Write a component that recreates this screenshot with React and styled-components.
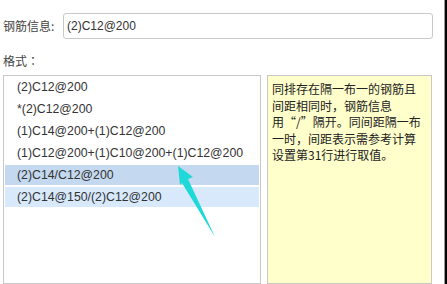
import React from "react";
import styled, { createGlobalStyle } from "styled-components";

const formats = [
  "(2)C12@200",
  "*(2)C12@200",
  "(1)C14@200+(1)C12@200",
  "(1)C12@200+(1)C10@200+(1)C12@200",
  "(2)C14/C12@200",
  "(2)C14@150/(2)C12@200",
];

const hintLines = [
  "同排存在隔一布一的钢筋且",
  "间距相同时，钢筋信息",
  "用“/”隔开。同间距隔一布",
  "一时，间距表示需参考计算",
  "设置第31行进行取值。",
];

const App = () => {
  return (
    <>
      <GlobalStyle />
      <Page>
        <Main>
          <FieldRow>
            <Label>钢筋信息:</Label>
            <Input defaultValue="(2)C12@200" />
          </FieldRow>
          <SectionLabel>
            格式<Colon>：</Colon>
          </SectionLabel>
          <Panels>
            <FormatList>
              {formats.map((f, i) => (
                <FormatItem key={f} tone={i === 4 ? "active" : i === 5 ? "hover" : null}>
                  {f}
                </FormatItem>
              ))}
            </FormatList>
            <Hint>
              {hintLines.map((l) => (
                <HintLine key={l}>{l}</HintLine>
              ))}
            </Hint>
          </Panels>
          {/* annotation arrow drawn over the list */}
          <Arrow width="60" height="80" viewBox="0 0 60 80">
            <polygon points="18,11 33,22 28,24 55,82 22,28 20,30" fill="#1fd9d9" />
          </Arrow>
        </Main>
        <Edge />
      </Page>
    </>
  );
};

const GlobalStyle = createGlobalStyle`
  html, body {
    margin: 0;
    padding: 0;
    background: #fff;
  }
  body {
    font-family: "Noto Sans CJK SC", sans-serif;
    color: #333;
  }
`;

const Page = styled.div`
  display: flex;
  width: 447px;
  height: 284px;
  overflow: hidden;
`;

const Main = styled.div`
  position: relative;
  flex: 1;
  padding: 13px 0 0 3px;
`;

const Edge = styled.div`
  width: 2px;
  border-left: 1px solid #9a9a9a;
  background: #050505;
`;

const FieldRow = styled.div`
  display: flex;
  align-items: center;
  height: 25px;
`;

const Label = styled.span`
  width: 60px;
  font-size: 12px;
  color: #444;
`;

const Input = styled.input`
  box-sizing: border-box;
  width: 370px;
  height: 26px;
  margin: 0;
  padding: 0 3px;
  border: 1px solid #c9c9c9;
  border-radius: 3px;
  font-family: "Liberation Sans", sans-serif;
  font-size: 12px;
  color: #333;
  outline: none;
`;

const SectionLabel = styled.div`
  margin-top: 14px;
  height: 18px;
  line-height: 18px;
  font-size: 12px;
  color: #444;
`;

const Colon = styled.span`
  font-family: "Noto Sans CJK TC", sans-serif;
`;

const Panels = styled.div`
  display: flex;
  gap: 6px;
  margin-top: 5px;
`;

const FormatList = styled.div`
  box-sizing: border-box;
  width: 258px;
  height: 209px;
  padding: 1px 0;
  border: 1px solid #c9c9c9;
  background: #fff;
`;

const FormatItem = styled.div`
  height: 20px;
  margin: 1px 1px 2px 1px;
  padding-left: 12px;
  line-height: 20px;
  font-family: "Liberation Sans", sans-serif;
  font-size: 12.3px;
  color: #333;
  white-space: nowrap;
  background: ${({ tone }) =>
    tone === "active" ? "#c4d9ef" : tone === "hover" ? "#d8e9fc" : "transparent"};
  &:first-child {
    margin-top: 0;
  }
`;

const Hint = styled.div`
  box-sizing: border-box;
  width: 165px;
  height: 209px;
  padding: 5px 4px;
  border: 1px solid #c9c9c9;
  background: #ffffcc;
`;

const HintLine = styled.div`
  height: 16.5px;
  line-height: 16.5px;
  font-size: 12px;
  color: #222;
  white-space: nowrap;
`;

const Arrow = styled.svg`
  position: absolute;
  left: 160px;
  top: 155px;
  overflow: visible;
`;

export default App;
